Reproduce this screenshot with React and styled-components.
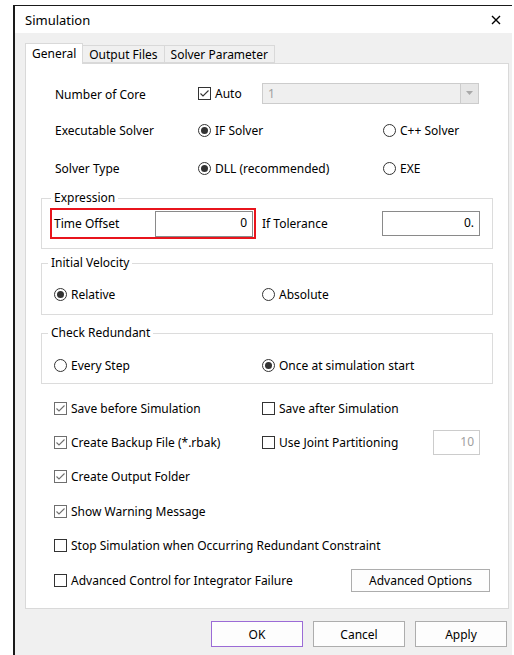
import React from 'react';
import styled, { createGlobalStyle } from 'styled-components';

const GlobalStyle = createGlobalStyle`
  html, body {
    margin: 0;
    padding: 0;
    background: #ffffff;
  }
  body {
    font-family: "Noto Sans", "Open Sans", "Liberation Sans", sans-serif;
    font-size: 12px;
    color: #000;
  }
`;

// dialog frame
const Window = styled.div`
  margin: 5px 0 0 13px;
  width: 499px;
  height: 650px;
  border-top: 1px solid #1a1a1a;
  border-left: 2px solid #1a1a1a;
  background: #f0f0f0;
  box-sizing: border-box;
`;

const TitleBar = styled.div`
  height: 27px;
  background: #ffffff;
  display: flex;
  align-items: center;
  justify-content: space-between;
  padding: 1px 11px 0 10px;
  box-sizing: border-box;
  font-size: 13px;
`;

const CloseButton = styled.span`
  display: flex;
  width: 10px;
  height: 10px;
`;

const Body = styled.div`
  padding: 10px 5px 0 10px;
`;

// tabs
const TabStrip = styled.div`
  display: flex;
  align-items: flex-end;
  height: 20px;
  position: relative;
  z-index: 1;
`;

const Tab = styled.div`
  box-sizing: border-box;
  height: ${p => (p.$active ? '21px' : '18px')};
  margin-bottom: ${p => (p.$active ? '-1px' : '0')};
  padding: ${p => (p.$active ? '0 6px 2px' : '0 6px')};
  display: flex;
  align-items: center;
  border: 1px solid #d9d9d9;
  border-bottom: ${p => (p.$active ? 'none' : '1px solid #d9d9d9')};
  border-left: ${p => (p.$first ? '1px solid #d9d9d9' : 'none')};
  background: ${p => (p.$active ? '#ffffff' : '#f0f0f0')};
  white-space: nowrap;
`;

const Panel = styled.div`
  width: 484px;
  box-sizing: border-box;
  border: 1px solid #d9d9d9;
  background: #ffffff;
  padding: 0 0 11px;
`;

const SettingsGrid = styled.div`
  display: grid;
  grid-template-columns: 143px 185px 1fr;
  grid-auto-rows: 20px;
  row-gap: 17.5px;
  align-items: center;
  padding: 19px 0 0 29px;
`;

const Label = styled.span`
  white-space: nowrap;
  padding-top: ${p => p.$drop || 0}px;
`;

const SpanCell = styled.div`
  grid-column: span 2;
  display: grid;
  grid-template-columns: 64px 217px;
  align-items: center;
`;

const Option = styled.label`
  display: flex;
  align-items: center;
  gap: 4px;
  white-space: nowrap;
`;

const Box = styled.span`
  box-sizing: border-box;
  width: 13px;
  height: 13px;
  border: 1px solid ${p => (p.$muted ? '#6f6f6f' : '#333333')};
  background: #fff;
  display: flex;
  align-items: center;
  justify-content: center;
  flex: none;
`;

const Radio = styled.span`
  box-sizing: border-box;
  width: 13px;
  height: 13px;
  border-radius: 50%;
  border: 1px solid #333333;
  background: #fff;
  display: flex;
  align-items: center;
  justify-content: center;
  flex: none;

  &::after {
    content: '';
    width: 7px;
    height: 7px;
    border-radius: 50%;
    background: ${p => (p.$on ? '#333333' : 'transparent')};
  }
`;

const Combo = styled.div`
  box-sizing: border-box;
  height: 21px;
  border: 1px solid #cccccc;
  background: #efefef;
  display: flex;
  color: #a0a0a0;
`;

const ComboText = styled.span`
  flex: 1;
  padding-left: 5px;
  line-height: 19px;
`;

const ComboArrow = styled.span`
  width: 17px;
  border-left: 1px solid #cccccc;
  background: #e6e6e6;
  display: flex;
  align-items: center;
  justify-content: center;
`;

// group boxes
const Group = styled.fieldset`
  margin: ${p => p.$top}px 15px 0 15px;
  padding: ${p => p.$pad};
  border: 1px solid #dcdcdc;
  min-inline-size: 0;
`;

const Legend = styled.legend`
  padding: 0 3px;
  margin-left: ${p => p.$shift}px;
  line-height: 16px;
`;

const TwoCol = styled.div`
  display: grid;
  grid-template-columns: 208px 1fr;
  align-items: center;
  height: 16px;
`;

const ExprRow = styled.div`
  display: flex;
  align-items: center;
`;

const Highlight = styled.div`
  box-sizing: border-box;
  width: 206px;
  height: 31px;
  border: 2px solid #e8141c;
  display: flex;
  align-items: center;
  padding: 0 1px 0 2px;
`;

const FieldLabel = styled.span`
  width: ${p => p.$w}px;
  margin-left: ${p => p.$gap || 0}px;
  flex: none;
  white-space: nowrap;
`;

const NumberField = styled.div`
  box-sizing: border-box;
  width: ${p => p.$w}px;
  height: ${p => p.$h}px;
  border: 1px solid ${p => (p.$disabled ? '#cccccc' : '#8a8a8a')};
  background: #ffffff;
  color: ${p => (p.$disabled ? '#a0a0a0' : '#000')};
  text-align: right;
  padding-right: 5px;
  line-height: ${p => p.$h - 4}px;
  flex: none;
`;

// checkbox list
const OptionsGrid = styled.div`
  display: grid;
  grid-template-columns: 208px 1fr;
  grid-auto-rows: 34.4px;
  align-items: center;
  padding: 7px 18px 0 28px;
`;

const SplitCell = styled.div`
  display: flex;
  align-items: center;
  justify-content: space-between;
  padding-right: 10px;
`;

const WideCell = styled.div`
  grid-column: span 2;
`;

const LastRow = styled.div`
  grid-column: span 2;
  display: flex;
  align-items: center;
  justify-content: space-between;
`;

const Button = styled.button`
  box-sizing: border-box;
  width: ${p => p.$w || 92}px;
  height: ${p => p.$h || 26}px;
  border: 1px solid ${p => (p.$focus ? '#9b6bd6' : '#adadad')};
  background: #fdfdfd;
  font-family: inherit;
  font-size: 12px;
  color: #000;
  padding: 0;
`;

const Footer = styled.div`
  display: flex;
  justify-content: flex-end;
  gap: 10px;
  margin: 12px 0 0;
  width: 482px;
`;

const Check = ({ checked, muted, children }) => (
  <Option>
    <Box $muted={muted && checked}>
      {checked && (
        <svg width="11" height="11" viewBox="0 0 11 11">
          <polyline
            points="1.5,5.5 4,8 9.5,2.5"
            fill="none"
            stroke={muted ? '#6f6f6f' : '#333'}
            strokeWidth="1.1"
          />
        </svg>
      )}
    </Box>
    {children}
  </Option>
);

const RadioOption = ({ on, children }) => (
  <Option>
    <Radio $on={on} />
    {children}
  </Option>
);

export default function App() {
  return (
    <>
      <GlobalStyle />
      <Window>
        <TitleBar>
          <span>Simulation</span>
          <CloseButton>
            <svg width="10" height="10" viewBox="0 0 10 10">
              <path d="M1 1 L9 9 M9 1 L1 9" stroke="#000" strokeWidth="1.4" />
            </svg>
          </CloseButton>
        </TitleBar>
        <Body>
          <TabStrip>
            <Tab $active $first>General</Tab>
            <Tab>Output Files</Tab>
            <Tab>Solver Parameter</Tab>
          </TabStrip>
          <Panel>
            <SettingsGrid>
              <Label $drop={2}>Number of Core</Label>
              <SpanCell>
                <Check checked>Auto</Check>
                <Combo>
                  <ComboText>1</ComboText>
                  <ComboArrow>
                    <svg width="7" height="4" viewBox="0 0 7 4">
                      <path d="M0 0 L7 0 L3.5 4 Z" fill="#a8a8a8" />
                    </svg>
                  </ComboArrow>
                </Combo>
              </SpanCell>

              <Label>Executable Solver</Label>
              <RadioOption on>IF Solver</RadioOption>
              <RadioOption>C++ Solver</RadioOption>

              <Label>Solver Type</Label>
              <RadioOption on>DLL (recommended)</RadioOption>
              <RadioOption>EXE</RadioOption>
            </SettingsGrid>

            <Group $top={12} $pad="2px 8px 9px">
              <Legend $shift={1}>Expression</Legend>
              <ExprRow>
                <Highlight>
                  <FieldLabel $w={101}>Time Offset</FieldLabel>
                  <NumberField $w={98} $h={26}>0</NumberField>
                </Highlight>
                <FieldLabel $w={120} $gap={6}>If Tolerance</FieldLabel>
                <NumberField $w={98} $h={25}>0.</NumberField>
              </ExprRow>
            </Group>

            <Group $top={6} $pad="15px 12px 12px">
              <Legend $shift={-6}>Initial Velocity</Legend>
              <TwoCol>
                <RadioOption on>Relative</RadioOption>
                <RadioOption>Absolute</RadioOption>
              </TwoCol>
            </Group>

            <Group $top={10} $pad="16px 12px 10px">
              <Legend $shift={-6}>Check Redundant</Legend>
              <TwoCol>
                <RadioOption>Every Step</RadioOption>
                <RadioOption on>Once at simulation start</RadioOption>
              </TwoCol>
            </Group>

            <OptionsGrid>
              <Check checked muted>Save before Simulation</Check>
              <Check>Save after Simulation</Check>

              <Check checked muted>Create Backup File (*.rbak)</Check>
              <SplitCell>
                <Check>Use Joint Partitioning</Check>
                <NumberField $w={47} $h={25} $disabled>10</NumberField>
              </SplitCell>

              <WideCell><Check checked muted>Create Output Folder</Check></WideCell>
              <WideCell><Check checked muted>Show Warning Message</Check></WideCell>
              <WideCell><Check>Stop Simulation when Occurring Redundant Constraint</Check></WideCell>

              <LastRow>
                <Check>Advanced Control for Integrator Failure</Check>
                <Button $w={139} $h={23}>Advanced Options</Button>
              </LastRow>
            </OptionsGrid>
          </Panel>
          <Footer>
            <Button $focus>OK</Button>
            <Button>Cancel</Button>
            <Button>Apply</Button>
          </Footer>
        </Body>
      </Window>
    </>
  );
}
